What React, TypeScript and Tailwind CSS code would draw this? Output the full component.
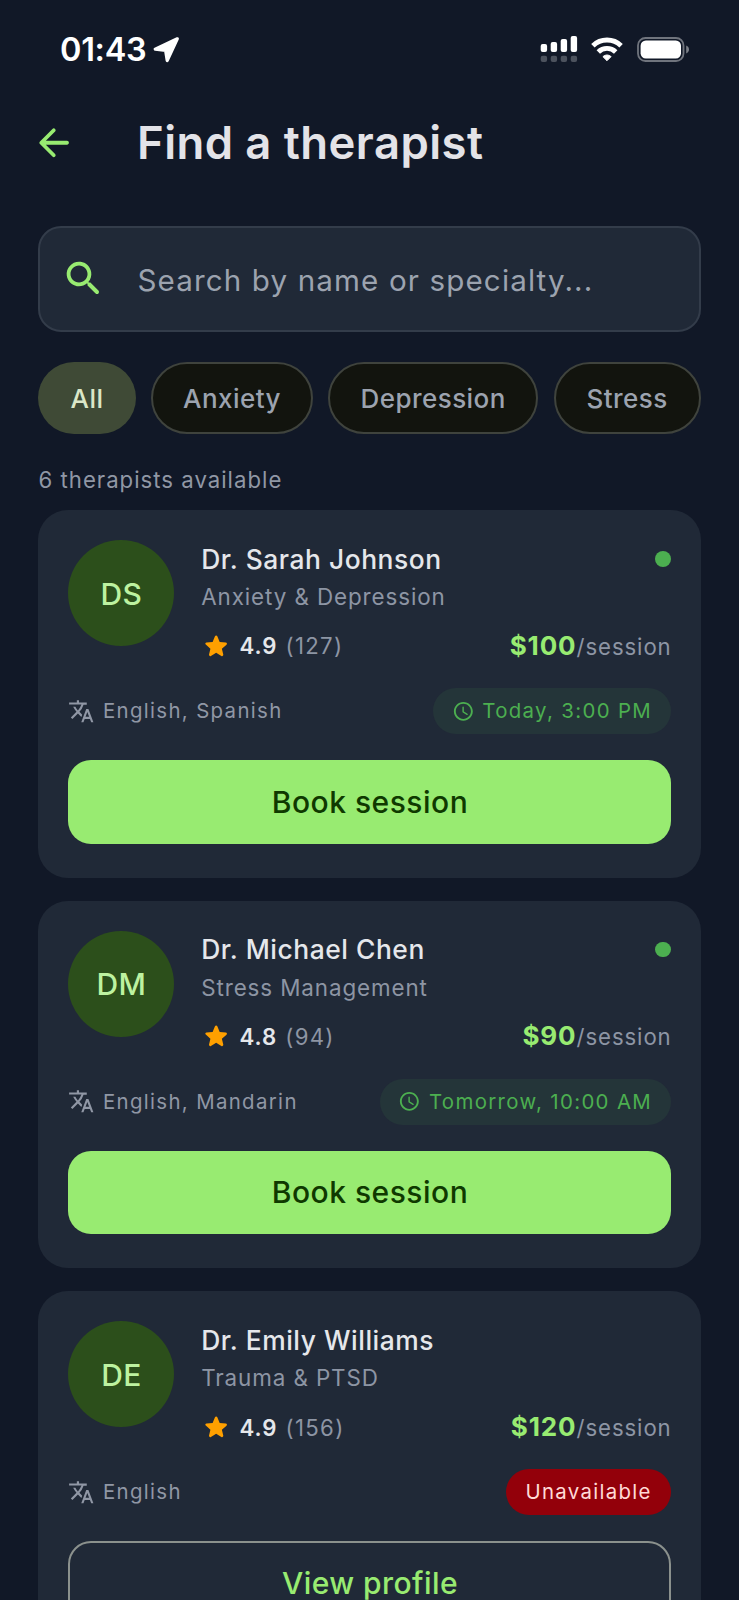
import React from "react";
import { MdTranslate } from "react-icons/md";

type Therapist = {
  initials: string;
  name: string;
  specialty: string;
  rating: string;
  reviews: number;
  price: number;
  languages: string;
  nextSlot?: string;
};

const therapists: Therapist[] = [
  {
    initials: "DS",
    name: "Dr. Sarah Johnson",
    specialty: "Anxiety & Depression",
    rating: "4.9",
    reviews: 127,
    price: 100,
    languages: "English, Spanish",
    nextSlot: "Today, 3:00 PM",
  },
  {
    initials: "DM",
    name: "Dr. Michael Chen",
    specialty: "Stress Management",
    rating: "4.8",
    reviews: 94,
    price: 90,
    languages: "English, Mandarin",
    nextSlot: "Tomorrow, 10:00 AM",
  },
  {
    initials: "DE",
    name: "Dr. Emily Williams",
    specialty: "Trauma & PTSD",
    rating: "4.9",
    reviews: 156,
    price: 120,
    languages: "English",
  },
];

const filters = [
  { label: "All", width: "w-[98px]" },
  { label: "Anxiety", width: "w-[161.5px]" },
  { label: "Depression", width: "w-[210.5px]" },
  { label: "Stress", width: "w-[147px]" },
];

const Icon: React.FC<{ d: string; className: string }> = ({ d, className }) => (
  <svg viewBox="0 0 24 24" fill="currentColor" className={className}>
    <path d={d} />
  </svg>
);

const icons = {
  back: "M19 11H7.83l4.88-4.88c.39-.39.39-1.03 0-1.42-.39-.39-1.02-.39-1.41 0l-6.59 6.59c-.39.39-.39 1.02 0 1.41l6.59 6.59c.39.39 1.02.39 1.41 0 .39-.39.39-1.02 0-1.41L7.83 13H19c.55 0 1-.45 1-1s-.45-1-1-1z",
  search:
    "M15.5 14h-.79l-.28-.27c1.2-1.4 1.82-3.31 1.48-5.34-.47-2.78-2.79-5-5.59-5.34-4.23-.52-7.79 3.04-7.27 7.27.34 2.8 2.56 5.12 5.34 5.59 2.03.34 3.94-.28 5.34-1.48l.27.28v.79l4.25 4.25c.41.41 1.08.41 1.49 0 .41-.41.41-1.08 0-1.49L15.5 14zm-6 0C7.01 14 5 11.99 5 9.5S7.01 5 9.5 5 14 7.01 14 9.5 11.99 14 9.5 14z",
  star: "M12 17.27l4.15 2.51c.76.46 1.69-.22 1.49-1.08l-1.1-4.72 3.67-3.18c.67-.58.31-1.68-.57-1.75l-4.83-.41-1.89-4.46c-.34-.81-1.5-.81-1.84 0L9.19 8.63l-4.83.41c-.88.07-1.24 1.17-.57 1.75l3.67 3.18-1.1 4.72c-.2.86.73 1.54 1.49 1.08l4.15-2.5z",
  clock:
    "M11.99 2C6.47 2 2 6.48 2 12s4.47 10 9.99 10C17.52 22 22 17.52 22 12S17.52 2 11.99 2zM12 20c-4.42 0-8-3.58-8-8s3.58-8 8-8 8 3.58 8 8-3.58 8-8 8zm-.22-13h-.06c-.4 0-.72.32-.72.72v4.72c0 .35.18.68.49.86l4.15 2.49c.34.2.78.1.98-.24.21-.34.1-.79-.25-.99l-3.87-2.3V7.72c0-.4-.32-.72-.72-.72z",
};

const StatusBar: React.FC = () => (
  <div className="flex h-[98px] items-center pl-[60px] pr-[49px] text-white">
    <span className="w-[93px] pt-[2px] text-[32.5px] font-semibold tracking-[-0.3px]">01:43</span>
    <svg width="27" height="27" viewBox="0 0 27 27" className="shrink-0">
      <path
        d="M24.3 2.8 2.2 13.1l10.4 1.3L14.2 24.6Z"
        fill="currentColor"
        stroke="currentColor"
        strokeWidth="3.2"
        strokeLinejoin="round"
      />
    </svg>
    <div className="ml-auto flex items-center">
      <svg width="38" height="28" viewBox="0 0 38 28">
        {[9, 7, 4, 1].map((y, i) => (
          <g key={y} fill="currentColor">
            <rect x={0.7 + i * 10} y={y} width="6.4" height={17 - y} rx="2" />
            <rect x={0.7 + i * 10} y="20.7" width="6.4" height="6.4" rx="2" opacity="0.25" />
          </g>
        ))}
      </svg>
      <svg width="32" height="25" viewBox="0 0 32 25" className="ml-[13px]">
        <g fill="none" stroke="currentColor" strokeWidth="4.9">
          <path d="M1.9 8.8a20.2 20.2 0 0 1 28.2 0" />
          <path d="M7.3 14.9a12.5 12.5 0 0 1 17.4 0" />
        </g>
        <path
          d="M11.9 19.6a6.6 6.6 0 0 1 8.2 0L16 23.7Z"
          fill="currentColor"
          stroke="currentColor"
          strokeWidth="1"
          strokeLinejoin="round"
        />
      </svg>
      <svg width="53" height="25" viewBox="0 0 53 25" className="ml-[14px]">
        <rect x="1" y="1" width="45.5" height="23" rx="7.5" fill="none" stroke="currentColor" strokeWidth="1.8" opacity="0.4" />
        <rect x="3.6" y="3.6" width="40.4" height="17.8" rx="5.2" fill="currentColor" />
        <path d="M49.2 8.6v7.8c1.8-.7 2.8-2.2 2.8-3.9s-1-3.2-2.8-3.9Z" fill="currentColor" opacity="0.45" />
      </svg>
    </div>
  </div>
);

const Availability: React.FC<{ slot?: string }> = ({ slot }) =>
  slot ? (
    <span className="flex h-[46px] items-center rounded-full bg-[#243539] px-[18.5px] text-[#4caf50]">
      <Icon d={icons.clock} className="mr-[8px] size-[22.7px]" />
      <span className="pt-px text-[20.4px] tracking-[1.35px]">{slot}</span>
    </span>
  ) : (
    <span className="flex h-[46px] items-center rounded-full bg-[#93000a] px-[19px] pt-px text-[20.4px] tracking-[1.3px] text-[#ffdad6]">
      Unavailable
    </span>
  );

const TherapistCard: React.FC<{ therapist: Therapist }> = ({ therapist }) => (
  <article className="rounded-[30px] bg-[#202937] pb-[34px] pl-[30.4px] pr-[30px] pt-[30px]">
    <div className="flex">
      <div className="flex size-[106px] shrink-0 items-center justify-center rounded-full bg-[#2c4f1b] pt-[2px] text-[30px] font-medium tracking-[0.3px] text-[#bdf2a0]">
        {therapist.initials}
      </div>
      <div className="ml-[26.8px] flex-1">
        <div className="flex h-[38px] items-center justify-between">
          <h2 className="pt-px text-[26.4px] font-medium tracking-[0.54px] text-[#e5e7eb]">{therapist.name}</h2>
          {therapist.nextSlot && <span className="size-[15.5px] rounded-full bg-[#4caf50]" />}
        </div>
        <p className="flex h-[38px] items-center text-[22.4px] tracking-[0.9px] text-[#8d95a4]">{therapist.specialty}</p>
        <div className="mt-[9px] flex h-[42px] items-center">
          <Icon d={icons.star} className="size-[30.3px] text-[#ffa000]" />
          <span className="ml-[8px] text-[22.2px] font-semibold tracking-[1px] text-[#e5e7eb]">{therapist.rating}</span>
          <span className="ml-[8px] text-[22.2px] tracking-[1.3px] text-[#8d95a4]">({therapist.reviews})</span>
          <span className="-mr-px ml-auto flex items-baseline pb-[2px]">
            <span className="text-[26px] font-bold tracking-[0.9px] text-[#98eb71]">${therapist.price}</span>
            <span className="text-[22.2px] tracking-[0.9px] text-[#8d95a4]">/session</span>
          </span>
        </div>
      </div>
    </div>

    <div className="mt-[21px] flex h-[46px] items-center justify-between">
      <div className="flex items-center text-[#9097a5]">
        <MdTranslate className="size-[26.5px]" />
        <span className="ml-[8px] pt-px text-[20.4px] tracking-[1.35px]">{therapist.languages}</span>
      </div>
      <Availability slot={therapist.nextSlot} />
    </div>

    {therapist.nextSlot ? (
      <button className="mt-[26px] h-[83.6px] w-full rounded-[23px] bg-[#98eb71] pl-px pt-px text-[30px] font-medium tracking-[0.5px] text-[#0f3900]">
        Book session
      </button>
    ) : (
      <button className="mt-[26px] h-[83.6px] w-full rounded-[23px] border-2 border-[#8b918d] pl-px pt-px text-[30px] font-medium tracking-[0.45px] text-[#98eb71]">
        View profile
      </button>
    )}
  </article>
);

export default function App() {
  return (
    <div className="h-[1600px] w-[739px] overflow-hidden bg-[#111827] font-['Inter',sans-serif]">
      <StatusBar />

      <header className="flex h-[89px] items-center pl-[30.5px]">
        <Icon d={icons.back} className="size-[45.5px] text-[#98eb71]" />
        <h1 className="ml-[61px] pt-[2px] text-[45.4px] font-semibold tracking-[0.45px] text-[#e3e3e8]">
          Find a therapist
        </h1>
      </header>

      <main className="pl-[38px] pr-[38.4px]">
        <label className="mt-[39px] flex h-[106px] items-center rounded-[23px] border-2 border-[#333c4a] bg-[#202937] pl-[21px]">
          <Icon d={icons.search} className="size-[45.5px] text-[#98eb71]" />
          <input
            placeholder="Search by name or specialty..."
            className="ml-[31px] flex-1 bg-transparent pt-[2px] text-[29.6px] tracking-[1.12px] outline-none placeholder:text-[#9ca3af]"
          />
        </label>

        <div className="mt-[30px] flex justify-between">
          {filters.map(({ label, width }, index) => (
            <button
              key={label}
              className={`${width} h-[72px] rounded-full text-[26px] font-medium tracking-[0.45px] ${
                index === 0
                  ? "bg-[#3f4a36] text-[#dbe7c8]"
                  : "border-2 border-[#3f433d] bg-[#12140e] text-[#9ca3af]"
              }`}
            >
              {label}
            </button>
          ))}
        </div>

        <p className="mt-[31px] h-[30px] pl-[0.5px] text-[22.2px] leading-[30px] tracking-[1px] text-[#9097a5]">
          6 therapists available
        </p>

        <div className="mt-[15px] flex flex-col gap-[23px]">
          {therapists.map((therapist) => (
            <TherapistCard key={therapist.initials} therapist={therapist} />
          ))}
        </div>
      </main>
    </div>
  );
}
